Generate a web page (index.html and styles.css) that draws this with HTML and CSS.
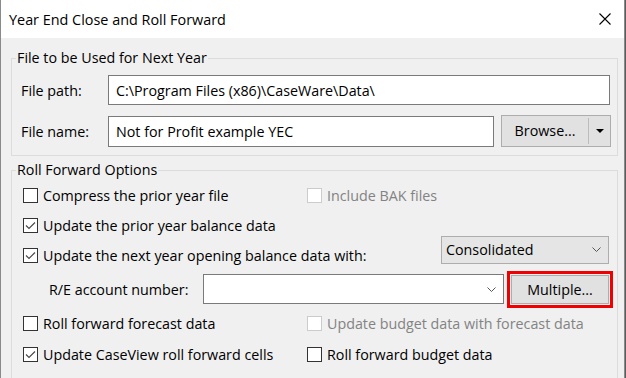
FILE: index.html
```html
<!DOCTYPE html>
<html lang="en">
<head>
  <meta charset="UTF-8" />
  <meta name="viewport" content="width=device-width, initial-scale=1.0"/>
  <title>Year End Close and Roll Forward</title>
  <link rel="stylesheet" href="styles.css">
</head>
<body>
  <div class="dialog">
    <header class="titlebar">
      <span class="title">Year End Close and Roll Forward</span>
      <svg class="close" width="12" height="12" viewBox="0 0 12 12">
        <path d="M0.5 0.5 L11.5 11.5 M11.5 0.5 L0.5 11.5" stroke="#000" stroke-width="1.1" fill="none"/>
      </svg>
    </header>

    <div class="content">
      <fieldset class="group file-group">
        <legend>File to be Used for Next Year</legend>
        <div class="field-row">
          <span class="field-label">File path:</span>
          <div class="textbox path">C:\Program Files (x86)\CaseWare\Data\</div>
        </div>
        <div class="field-row">
          <span class="field-label">File name:</span>
          <div class="textbox name">Not for Profit example YEC</div>
          <div class="split-btn">
            <span class="split-main">Browse...</span>
            <span class="split-arrow">
              <svg width="8" height="4" viewBox="0 0 8 4"><path d="M0 0 H8 L4 4 Z" fill="#000"/></svg>
            </span>
          </div>
        </div>
      </fieldset>

      <fieldset class="group options-group">
        <legend>Roll Forward Options</legend>

        <div class="opt-row">
          <label class="check"><span class="box"></span>Compress the prior year file</label>
          <label class="check disabled"><span class="box"></span>Include BAK files</label>
        </div>

        <div class="opt-row">
          <label class="check"><span class="box checked"><svg width="13" height="13" viewBox="0 0 13 13"><path d="M2 6.5 L5 9.5 L11 3.5" stroke="#4a4a4a" stroke-width="1.2" fill="none"/></svg></span>Update the prior year balance data</label>
        </div>

        <div class="opt-row wide">
          <label class="check"><span class="box checked"><svg width="13" height="13" viewBox="0 0 13 13"><path d="M2 6.5 L5 9.5 L11 3.5" stroke="#4a4a4a" stroke-width="1.2" fill="none"/></svg></span>Update the next year opening balance data with:</label>
          <div class="dropdown">
            <span>Consolidated</span>
            <svg width="9" height="5" viewBox="0 0 9 5"><path d="M0.5 0.5 L4.5 4.5 L8.5 0.5" stroke="#555" stroke-width="1" fill="none"/></svg>
          </div>
        </div>

        <div class="opt-row account-row">
          <span class="account-label">R/E account number:</span>
          <div class="combo">
            <svg width="9" height="5" viewBox="0 0 9 5"><path d="M0.5 0.5 L4.5 4.5 L8.5 0.5" stroke="#555" stroke-width="1" fill="none"/></svg>
          </div>
          <button class="btn highlighted">Multiple...</button>
        </div>

        <div class="opt-row">
          <label class="check"><span class="box"></span>Roll forward forecast data</label>
          <label class="check disabled"><span class="box"></span>Update budget data with forecast data</label>
        </div>

        <div class="opt-row">
          <label class="check"><span class="box checked"><svg width="13" height="13" viewBox="0 0 13 13"><path d="M2 6.5 L5 9.5 L11 3.5" stroke="#4a4a4a" stroke-width="1.2" fill="none"/></svg></span>Update CaseView roll forward cells</label>
          <label class="check"><span class="box"></span>Roll forward budget data</label>
        </div>
      </fieldset>
    </div>
  </div>
</body>
</html>
```

FILE: styles.css
```css
* {
  box-sizing: border-box;
}

body {
  margin: 0;
  padding: 0;
  background: #5c5c5c;
  font-family: 'Open Sans', 'Noto Sans', sans-serif;
  font-size: 14.3px;
  color: #000;
}

.dialog {
  width: 625px;
  height: 378px;
  background: #f0f0f0;
  border-left: 1px solid #8a8a8a;
  border-right: 1px solid #8a8a8a;
  overflow: hidden;
}

.titlebar {
  height: 38px;
  background: #fff;
  display: flex;
  align-items: center;
  justify-content: space-between;
  padding: 0 13px 0 8px;
  font-size: 14.4px;
}

.content {
  padding: 10px 6px 0 10px;
}

/* group boxes */
.group {
  margin: 0;
  border: 1px solid #dcdcdc;
  padding: 2px 6px 8px 9px;
}

.group legend {
  margin-left: -5px;
  padding: 0 1px;
  line-height: 20px;
}

.options-group {
  margin-top: 4px;
  padding-right: 8px;
  padding-top: 0;
  height: 260px;
}

/* file rows */
.field-row {
  display: flex;
  align-items: center;
  margin-top: 5px;
}

.field-row + .field-row {
  margin-top: 10px;
}

.field-label {
  width: 87px;
  flex-shrink: 0;
}

.textbox {
  height: 30px;
  background: #fff;
  border: 1px solid #7a7a7a;
  padding: 0 7px;
  display: flex;
  align-items: center;
}

.textbox.path {
  width: 502px;
}

.textbox.name {
  flex: 1;
  height: 31px;
}

.split-btn {
  margin-left: 7px;
  width: 110px;
  height: 32px;
  background: #e1e1e1;
  border: 1px solid #adadad;
  display: flex;
  align-items: center;
}

.split-main {
  flex: 1;
  text-align: center;
  border-right: 1px solid #bcbcbc;
  height: 26px;
  line-height: 26px;
}

.split-arrow {
  width: 21px;
  display: flex;
  justify-content: center;
}

/* option rows */
.opt-row {
  display: grid;
  grid-template-columns: 284px 1fr;
  align-items: center;
  height: 30px;
}

.opt-row.wide {
  display: flex;
  justify-content: space-between;
}

.check {
  display: flex;
  align-items: center;
  gap: 5px;
  padding-left: 2px;
  white-space: nowrap;
}

.box {
  width: 15px;
  height: 15px;
  background: #fff;
  border: 1px solid #333;
  display: flex;
  align-items: center;
  justify-content: center;
}

.check.disabled {
  color: #838383;
}

.check.disabled .box {
  border-color: #cccccc;
}

.dropdown {
  width: 168px;
  height: 28px;
  margin-bottom: 11px;
  background: #e5e5e5;
  border: 1px solid #adadad;
  display: flex;
  align-items: center;
  justify-content: space-between;
  padding: 0 7px 0 4px;
}

.account-row {
  display: flex;
  height: 38px;
}

.account-label {
  width: 182px;
  padding-left: 28px;
  flex-shrink: 0;
  white-space: nowrap;
}

.combo {
  width: 301px;
  height: 30px;
  flex-shrink: 0;
  background: #fff;
  border: 1px solid #7a7a7a;
  display: flex;
  align-items: center;
  justify-content: flex-end;
  padding-right: 7px;
}

.btn {
  margin-left: 7px;
  width: 98px;
  height: 29px;
  flex-shrink: 0;
  background: #e1e1e1;
  border: 1px solid #adadad;
  font-family: inherit;
  font-size: 14.3px;
  color: #000;
  padding: 0;
}

.btn.highlighted {
  outline: 3px solid #f00000;
  outline-offset: 1px;
}

.options-group .opt-row:nth-child(6),
.options-group .opt-row:nth-child(7) {
  height: 31px;
}
```
